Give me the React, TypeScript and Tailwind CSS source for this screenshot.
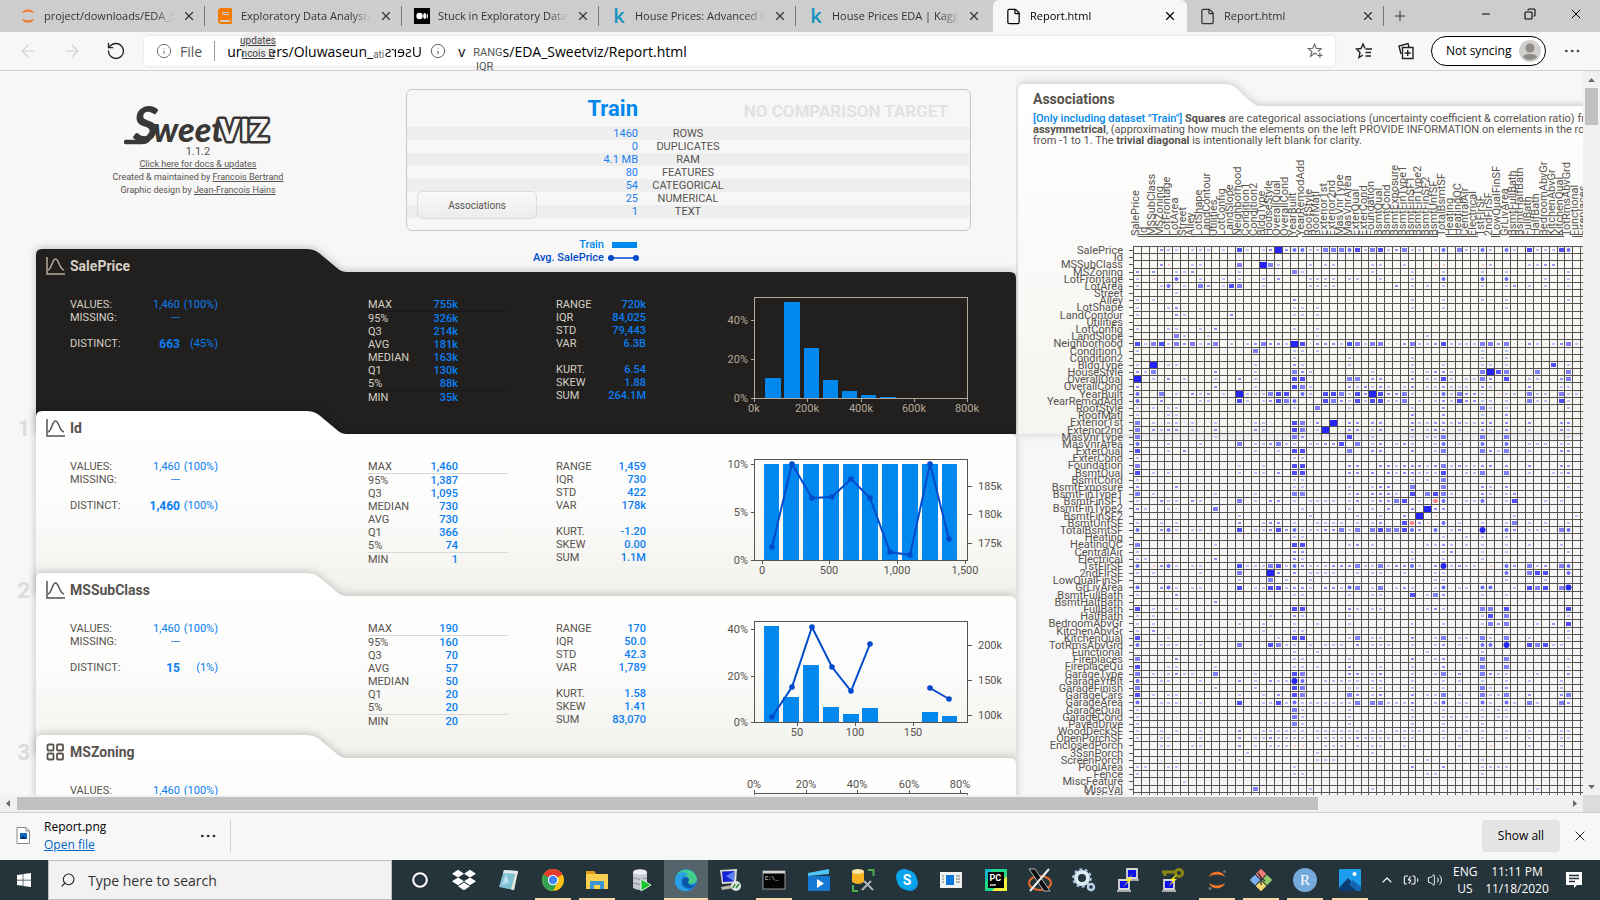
import React from "react";
import { ArrowLeft, ArrowRight, RotateCw, Info, File, X, Plus, Minus, Copy, Ellipsis, ChevronUp, Search, BatteryCharging, Volume2 } from "lucide-react";
import { FaBook, FaDropbox, FaWindows } from "react-icons/fa";

const INK = "#57534e";
const BLUE = "#0088ee";
const LINE = "#004acc";

/* ---------- Browser chrome ---------- */

function JupyterMark({ small }: { small?: boolean }) {
  return (
    <svg viewBox="0 0 20 20" className="size-4 shrink-0" aria-hidden="true">
      <path d="M2 7C4 0 16 0 18 7C14 3.800 6 3.800 2 7Z" fill="#f37726" />
      <path d="M2 13C4 20 16 20 18 13C14 16.200 6 16.200 2 13Z" fill="#f37726" />
      {small && <circle cx="17.500" cy="1.500" r="1.300" fill="#777" />}
      {small && <circle cx="3" cy="18.500" r="1.500" fill="#777" />}
    </svg>
  );
}

function MediumMark() {
  return (
    <svg viewBox="0 0 16 16" className="size-4 shrink-0" aria-hidden="true">
      <rect width="16" height="16" fill="#000" />
      <circle cx="5.500" cy="8" r="3.200" fill="#fff" />
      <ellipse cx="10.700" cy="8" rx="1.500" ry="3" fill="#fff" />
      <ellipse cx="13.300" cy="8" rx="0.600" ry="2.600" fill="#fff" />
    </svg>
  );
}

const kaggle = <span className="w-4 shrink-0 text-center font-['Open_Sans',sans-serif] text-xl leading-none font-semibold text-[#1593bd]">k</span>;

const tabs = [
  { title: "project/downloads/EDA_Sweetviz", icon: <JupyterMark /> },
  { title: "Exploratory Data Analysis in", icon: <FaBook className="size-4 shrink-0 text-[#f57c00]" /> },
  { title: "Stuck in Exploratory Data An", icon: <MediumMark /> },
  { title: "House Prices: Advanced Reg", icon: kaggle },
  { title: "House Prices EDA | Kaggle", icon: kaggle },
  { title: "Report.html", icon: <File className="size-[17px] shrink-0" strokeWidth={1.75} />, active: true },
  { title: "Report.html", icon: <File className="size-[17px] shrink-0" strokeWidth={1.75} /> },
];

function TabBar() {
  return (
    <header className="flex h-8 shrink-0 items-stretch bg-[#cdcdcd] pl-2 text-[11px] text-[#333]">
      {tabs.map((t, i) => (
        <div
          key={i}
          className={
            t.active
              ? "flex w-[194px] items-center gap-2 rounded-t-md bg-[#f7f7f7] pr-2.5 pl-3 text-black"
              : "flex w-[197px] items-center gap-2 pr-3 pl-3"
          }
        >
          {t.icon}
          <span className="min-w-0 flex-1 overflow-hidden whitespace-nowrap [mask-image:linear-gradient(to_right,#000_85%,transparent)]">{t.title}</span>
          <button aria-label="Close tab" className="shrink-0"><X className="size-3.5" strokeWidth={2} /></button>
          {!t.active && i !== 4 && <span className="-mr-3 h-5 w-px bg-[#777]" />}
        </div>
      ))}
      <button aria-label="New tab" className="px-2"><Plus className="size-4" strokeWidth={1.5} /></button>
      <div className="ml-auto flex items-center gap-8 pr-4 pb-1 text-black">
        <button aria-label="Minimize"><Minus className="size-3" strokeWidth={2} /></button>
        <button aria-label="Restore"><Copy className="size-3 -scale-x-100" strokeWidth={2.2} /></button>
        <button aria-label="Close"><X className="size-4" strokeWidth={1.5} /></button>
      </div>
    </header>
  );
}

function Toolbar() {
  return (
    <div className="flex h-[39px] shrink-0 items-center border-b border-[#d0d0d0] bg-[#f7f7f7] pr-[18px] pl-3.5 text-[#222]">
      <button aria-label="Back" className="px-1"><ArrowLeft className="size-5 text-[#cfcfcf]" strokeWidth={1.4} /></button>
      <button aria-label="Forward" className="ml-5"><ArrowRight className="size-5 text-[#cfcfcf]" strokeWidth={1.4} /></button>
      <button aria-label="Refresh" className="ml-6"><RotateCw className="size-5 -scale-x-100" strokeWidth={1.6} /></button>
      <div className="relative ml-[18px] flex h-[30px] flex-1 items-center rounded-sm bg-white pl-3 text-[14px] shadow-[0_0_3px_rgba(0,0,0,0.12)]">
        <Info className="size-4 text-[#666]" strokeWidth={1.4} />
        <span className="ml-2 text-[#555]">File</span>
        <span className="ml-3 h-5 w-px bg-[#999]" />
        <span className="ml-3 flex w-[146px] justify-between whitespace-nowrap text-black">
          <span>un</span>
          <span>ers/Oluwaseun_</span>
        </span>
        <span className="pt-2 font-['Roboto',sans-serif] text-[10px] leading-none text-[#666]">ati</span>
        <span className="inline-block w-[38px] -scale-x-100 text-black">Users</span>
        <Info className="ml-2 size-4 text-[#444]" strokeWidth={1.3} />
        <span className="ml-3 text-black">v</span>
        <span className="ml-2 pt-1 font-['Roboto',sans-serif] text-[11px] text-[#555]">RANG</span>
        <span className="text-black">s/EDA_Sweetviz/Report.html</span>
        <span className="absolute -top-1 left-[96px] flex h-6 w-9 flex-col items-center rounded-full bg-[#e9e9e9]/90 pt-0.5 font-['Roboto',sans-serif] text-[10px] leading-[13px] text-[#444] underline">
          <span>updates</span>
          <span>ncois B</span>
        </span>
        <span className="absolute top-[25px] left-[332px] font-['Roboto',sans-serif] text-[11px] leading-none text-[#555]">IQR</span>
        <button aria-label="Add to favorites" className="ml-auto pr-3">
          <svg viewBox="0 0 18 18" className="size-4" fill="none" stroke="#666" strokeWidth="1.300"><path d="M11 12.500L8.500 11.500L4 15L5.500 9.500L1.500 6.500L6.500 6L8.500 1.500L10.500 6L16 6.500L12.500 9.500" /><path d="M14.500 11V17M11.500 14H17.500" /></svg>
        </button>
      </div>
      <button aria-label="Favorites" className="ml-5">
        <svg viewBox="0 0 18 18" className="size-[18px]" fill="none" stroke="#222" strokeWidth="1.4"><path d="M10 6.500L8 2L6 6.500L1.500 7L5 10.500L4 15.500L8 13" /><path d="M10.500 7H17M10.500 10.500H16M10.500 14H16" /></svg>
      </button>
      <button aria-label="Collections" className="ml-6">
        <svg viewBox="0 0 18 18" className="size-[18px]" fill="none" stroke="#222" strokeWidth="1.4"><path d="M4 12L2 4L11 1.500L12 5M5.500 5.500H16V16.500H5.500Z" /><path d="M10.700 8V14M7.700 11H13.700" /></svg>
      </button>
      <button className="ml-4 flex h-[30px] w-[115px] items-center justify-between rounded-full border border-black bg-white pr-1 pl-3.5 text-[12px] text-black">
        Not syncing
        <svg viewBox="0 0 22 22" className="size-[22px]"><circle cx="11" cy="11" r="11" fill="#d2d0ce" /><circle cx="11" cy="8" r="4.500" fill="#8f8b87" /><path d="M4 17C4 13 18 13 18 17C15 21 7 21 4 17Z" fill="#8f8b87" /></svg>
      </button>
      <button aria-label="Menu" className="ml-4"><Ellipsis className="size-5" strokeWidth={1.2} /></button>
    </div>
  );
}

/* ---------- Report header ---------- */

function Logo() {
  return (
    <svg viewBox="0 0 148 42" className="h-[42px] w-[148px]" role="img" aria-label="Sweetviz">
      <path d="M2 37H18Q25 37 26 30" fill="none" stroke="#3a3836" strokeWidth="4.500" strokeLinecap="round" />
      <text x="9" y="37" fontFamily="Lato" fontWeight="900" fontStyle="italic" fontSize="49" fill="#3a3836">S</text>
      <text x="29" y="37" fontFamily="Lato" fontWeight="900" fontStyle="italic" fontSize="34" fill="#3a3836">weet</text>
      <text x="95" y="36" fontFamily="Roboto" fontWeight="700" fontSize="32" fill="#f7f7f7" stroke="#3a3836" strokeWidth="5" strokeLinejoin="round" paintOrder="stroke">VIZ</text>
    </svg>
  );
}

const summary: [string, string][] = [
  ["1460", "ROWS"], ["0", "DUPLICATES"], ["4.1 MB", "RAM"], ["80", "FEATURES"], ["54", "CATEGORICAL"], ["25", "NUMERICAL"], ["1", "TEXT"],
];

function ReportHeader() {
  return (
    <div className="flex h-[178px] pt-[18px]">
      <div className="flex w-[406px] shrink-0 flex-col items-center pt-4 pr-2.5 text-[9px] leading-[13px] text-[#57534e]">
        <Logo />
        <span className="-mt-0.5 text-[11px]">1.1.2</span>
        <a href="#docs" className="underline">Click here for docs &amp; updates</a>
        <span>Created &amp; maintained by <a href="#fb" className="underline">Francois Bertrand</a></span>
        <span>Graphic design by <a href="#jfh" className="underline">Jean-Francois Hains</a></span>
      </div>
      <div className="w-[565px] shrink-0">
        <div className="relative h-[142px] rounded-md border border-[#cfc6c2]">
          <table className="w-full table-fixed border-collapse text-[11px] leading-[13px]">
            <thead>
              <tr className="h-[37px]">
                <th className="w-[231px] p-0 text-right text-[22px] leading-7 font-bold text-[#0088ee]">Train</th>
                <th className="w-[100px]" />
                <th className="p-0 pt-1 pr-[22px] text-right text-[17px] leading-7 font-bold whitespace-nowrap text-[#e2e2e2]">NO COMPARISON TARGET</th>
              </tr>
            </thead>
            <tbody>
              {summary.map(([v, l]) => (
                <tr key={l} className="h-[13px] odd:bg-[#eeeeee]">
                  <td className="p-0 text-right text-[#1c80f0]">{v}</td>
                  <td className="p-0 text-center text-[#57534e]">{l}</td>
                  <td className="p-0" />
                </tr>
              ))}
            </tbody>
          </table>
          <button className="absolute bottom-[11px] left-[10px] h-7 w-[120px] rounded-md border border-[#dcdcdc] bg-linear-to-b from-[#fafafa] to-[#ececec] text-[10px] text-[#57534e]">Associations</button>
        </div>
        <div className="flex w-[231px] flex-col items-end pt-[7px] text-[11px] leading-[13px] font-medium">
          <div className="flex items-center gap-2 text-[#0088ee]">Train<span className="h-1.5 w-[25px] bg-[#0088ee]" /></div>
          <div className="-mr-0.5 flex items-center gap-1 text-[#004acc]">
            Avg. SalePrice
            <svg viewBox="0 0 31 8" className="h-2 w-[31px]"><path d="M3 4H28" stroke={LINE} strokeWidth="1.500" /><circle cx="3" cy="4" r="3" fill={LINE} /><circle cx="28" cy="4" r="3" fill={LINE} /></svg>
          </div>
        </div>
      </div>
    </div>
  );
}

/* ---------- Feature cards ---------- */

type Tick = [number, string];
type Bar = [number, number, number];
type Chart = { bars: Bar[]; lines?: [number, number][][]; left: Tick[]; right?: Tick[]; bottom: Tick[] };

function Histogram({ chart, color }: { chart: Chart; color: string }) {
  return (
    <svg viewBox="0 0 310 130" className="h-[130px] w-[310px]" fontFamily="Roboto, sans-serif" fontSize="11" fill={color}>
      {chart.bars.map(([x, y, w], i) => <rect key={i} x={x} y={y} width={w} height={109 - y} fill={BLUE} />)}
      <rect x="54.500" y="8.500" width="213" height="101" fill="none" stroke={color} />
      {chart.left.map(([y, t]) => (
        <g key={t}><path d={`M51 ${y + 0.5}H54`} stroke={color} /><text x="48" y={y + 4} textAnchor="end">{t}</text></g>
      ))}
      {chart.right?.map(([y, t]) => (
        <g key={t}><path d={`M268 ${y + 0.5}H272`} stroke={color} /><text x="278" y={y + 4}>{t}</text></g>
      ))}
      {chart.bottom.map(([x, t]) => (
        <g key={t}><path d={`M${x + 0.5} 110V113`} stroke={color} /><text x={x} y="123" textAnchor="middle">{t}</text></g>
      ))}
      {chart.lines?.map((pts, i) => (
        <g key={i} fill={LINE}>
          <polyline points={pts.map((p) => p.join(",")).join(" ")} fill="none" stroke={LINE} strokeWidth="2" />
          {pts.map(([x, y]) => <circle key={x} cx={x} cy={y} r="2.800" />)}
        </g>
      ))}
    </svg>
  );
}

function TopAxis() {
  const ticks: Tick[] = [[54, "0%"], [106, "20%"], [157, "40%"], [209, "60%"], [260, "80%"]];
  return (
    <svg viewBox="0 0 310 130" className="h-[130px] w-[310px]" fontFamily="Roboto, sans-serif" fontSize="11" fill={INK}>
      <path d="M54.500 60V18.500H267.500V60" fill="none" stroke={INK} />
      {ticks.map(([x, t]) => (
        <g key={t}><path d={`M${x + 0.5} 15V18`} stroke={INK} /><text x={x} y="13" textAnchor="middle">{t}</text></g>
      ))}
    </svg>
  );
}

type Feature = {
  n?: number; name: string; dark?: boolean; distinct?: [string, string];
  quant?: [string, string][]; stats?: [string, string][]; chart?: Chart;
};

const features: Feature[] = [
  {
    name: "SalePrice", dark: true, distinct: ["663", "(45%)"],
    quant: [["MAX", "755k"], ["95%", "326k"], ["Q3", "214k"], ["AVG", "181k"], ["MEDIAN", "163k"], ["Q1", "130k"], ["5%", "88k"], ["MIN", "35k"]],
    stats: [["RANGE", "720k"], ["IQR", "84,025"], ["STD", "79,443"], ["VAR", "6.3B"], ["", ""], ["KURT.", "6.54"], ["SKEW", "1.88"], ["SUM", "264.1M"]],
    chart: {
      bars: [[65, 89, 16], [84, 13, 16], [104, 59, 15], [123, 91, 15], [142, 102, 15], [161, 106, 15], [180, 108, 16]],
      left: [[31, "40%"], [70, "20%"], [109, "0%"]],
      bottom: [[54, "0k"], [107, "200k"], [161, "400k"], [214, "600k"], [267, "800k"]],
    },
  },
  {
    n: 1, name: "Id", distinct: ["1,460", "(100%)"],
    quant: [["MAX", "1,460"], ["95%", "1,387"], ["Q3", "1,095"], ["MEDIAN", "730"], ["AVG", "730"], ["Q1", "366"], ["5%", "74"], ["MIN", "1"]],
    stats: [["RANGE", "1,459"], ["IQR", "730"], ["STD", "422"], ["VAR", "178k"], ["", ""], ["KURT.", "-1.20"], ["SKEW", "0.00"], ["SUM", "1.1M"]],
    chart: {
      bars: [[64, 13, 15], [83, 13, 16], [103, 13, 16], [123, 13, 16], [143, 13, 16], [162, 13, 16], [182, 13, 16], [202, 13, 16], [222, 13, 16], [242, 13, 15]],
      lines: [[[72, 96], [92, 13], [112, 47], [132, 46], [151, 28], [170, 47], [190, 101], [210, 104], [230, 13], [249, 88]]],
      left: [[13, "10%"], [61, "5%"], [109, "0%"]],
      right: [[35, "185k"], [63, "180k"], [92, "175k"]],
      bottom: [[62, "0"], [129, "500"], [197, "1,000"], [265, "1,500"]],
    },
  },
  {
    n: 2, name: "MSSubClass", distinct: ["15", "(1%)"],
    quant: [["MAX", "190"], ["95%", "160"], ["Q3", "70"], ["AVG", "57"], ["MEDIAN", "50"], ["Q1", "20"], ["5%", "20"], ["MIN", "20"]],
    stats: [["RANGE", "170"], ["IQR", "50.0"], ["STD", "42.3"], ["VAR", "1,789"], ["", ""], ["KURT.", "1.58"], ["SKEW", "1.41"], ["SUM", "83,070"]],
    chart: {
      bars: [[64, 13, 15], [83, 84, 16], [103, 52, 16], [123, 94, 16], [143, 101, 16], [162, 95, 16], [222, 99, 16], [242, 103, 15]],
      lines: [[[72, 104], [92, 74], [112, 14], [132, 54], [151, 78], [170, 31]], [[230, 75], [249, 86]]],
      left: [[16, "40%"], [63, "20%"], [109, "0%"]],
      right: [[32, "200k"], [67, "150k"], [102, "100k"]],
      bottom: [[97, "50"], [155, "100"], [213, "150"]],
    },
  },
  { n: 3, name: "MSZoning" },
];

function Row({ label, value, dark, bold, extra }: { label: string; value: string; dark?: boolean; bold?: boolean; extra?: string }) {
  return (
    <div className="flex h-[13px]">
      <dt className={dark ? "w-[60px] text-[#d6cfc4]" : "w-[60px] text-[#57534e]"}>{label}</dt>
      <dd className={bold ? "w-[50px] text-right text-[12px] leading-[14px] font-bold" : "w-[50px] text-right"}>{value}</dd>
      <dd className="w-[38px] text-right">{extra}</dd>
    </div>
  );
}

function FeatureCard({ f }: { f: Feature }) {
  const label = f.dark ? "text-[#d6cfc4]" : "text-[#57534e]";
  const fg = f.dark ? "#b5a898" : INK;
  return (
    <section className="relative flex h-[162px]">
      <div className="absolute top-0 left-[36px] h-[185px] w-[980px] drop-shadow-[0_-1px_4px_rgba(0,0,0,0.22)]">
        <div
          className={
            f.dark
              ? "h-full bg-[#21201e] [clip-path:path('M0_6Q0_0_6_0H270Q278_0_283_4L301_19Q305_23_311_23H974Q980_23_980_29V185H0Z')]"
              : "h-full bg-linear-to-b from-white via-[#fcfcfb] to-[#f1f1ec] [clip-path:path('M0_6Q0_0_6_0H270Q278_0_283_4L301_19Q305_23_311_23H974Q980_23_980_29V185H0Z')]"
          }
        />
      </div>
      <div className="relative w-[36px] shrink-0 pt-1 pr-1.5 text-right text-[22px] leading-7 font-bold text-[#dcdcdc]">{f.n}</div>
      <div className="relative min-w-0 flex-1">
        <h2 className={`flex h-[33px] items-center gap-[5px] pt-px pl-[10px] text-[14px] font-bold ${label}`}>
          {f.chart ? (
            <svg viewBox="0 0 19 18" className="h-[18px] w-[19px]" fill="none" stroke={fg} strokeWidth="1.500"><path d="M1 0V17H19" /><path d="M2 13C6 12 6 2 9.500 2S13 12 18 13" /></svg>
          ) : (
            <svg viewBox="0 0 19 18" className="h-[18px] w-[19px]" fill="none" stroke={fg} strokeWidth="1.800"><rect x="1.500" y="1.500" width="6" height="6" rx="1" /><rect x="11" y="1.500" width="6" height="6" rx="1" /><rect x="1.500" y="10.500" width="6" height="6" rx="1" /><rect x="11" y="10.500" width="6" height="6" rx="1" /></svg>
          )}
          {f.name}
        </h2>
        <div className="flex text-[11px] leading-[13px] text-[#0a7df2]">
          <dl className="ml-[34px] w-[298px] shrink-0 pt-4">
            <Row label="VALUES:" value="1,460" extra="(100%)" dark={f.dark} />
            <Row label="MISSING:" value="---" dark={f.dark} />
            <div className="h-[13px]" />
            {f.distinct && <Row label="DISTINCT:" value={f.distinct[0]} extra={f.distinct[1]} bold dark={f.dark} />}
          </dl>
          <dl className="w-[188px] shrink-0 pt-4">
            {f.quant?.map(([k, v], i) => (
              <div
                key={k}
                className={
                  i === 0
                    ? `flex w-[140px] border-b ${f.dark ? "border-[#1a1918]" : "border-[#d8d8d8]"}`
                    : i === 7
                      ? `flex w-[140px] border-t ${f.dark ? "border-[#1a1918]" : "border-[#d8d8d8]"}`
                      : "flex w-[140px]"
                }
              >
                <dt className={`w-[50px] ${label}`}>{k}</dt>
                <dd className="w-[40px] text-right font-medium">{v}</dd>
              </div>
            ))}
          </dl>
          <dl className="w-[144px] shrink-0 pt-4">
            {f.stats?.map(([k, v], i) => (
              <div key={i} className="flex h-[13px]">
                <dt className={`w-[45px] ${label}`}>{k}</dt>
                <dd className="w-[45px] text-right font-medium">{v}</dd>
              </div>
            ))}
          </dl>
          <div className="pt-[7px]">{f.chart ? <Histogram chart={f.chart} color={fg} /> : <TopAxis />}</div>
        </div>
      </div>
    </section>
  );
}

/* ---------- Associations matrix ---------- */

const names = "SalePrice Id MSSubClass MSZoning LotFrontage LotArea Street Alley LotShape LandContour Utilities LotConfig LandSlope Neighborhood Condition1 Condition2 BldgType HouseStyle OverallQual OverallCond YearBuilt YearRemodAdd RoofStyle RoofMatl Exterior1st Exterior2nd MasVnrType MasVnrArea ExterQual ExterCond Foundation BsmtQual BsmtCond BsmtExposure BsmtFinType1 BsmtFinSF1 BsmtFinType2 BsmtFinSF2 BsmtUnfSF TotalBsmtSF Heating HeatingQC CentralAir Electrical 1stFlrSF 2ndFlrSF LowQualFinSF GrLivArea BsmtFullBath BsmtHalfBath FullBath HalfBath BedroomAbvGr KitchenAbvGr KitchenQual TotRmsAbvGrd Functional Fireplaces FireplaceQu GarageType GarageYrBlt GarageFinish GarageCars GarageArea GarageQual GarageCond PavedDrive WoodDeckSF OpenPorchSF EnclosedPorch 3SsnPorch ScreenPorch PoolArea Fence MiscFeature MiscVal MoSold".split(" ");

/* One string per row: a strength letter, then the columns that have it.
   t faint dot, a weak, b moderate, d medium, e strong, f strongest,
   o / O round marks for numeric pairs, r / R negative. */
const cells = [
  "a 4 5 7 8 9 11 14 16 22 23 29 32 35 36 38 42 43 45 48 51 52 53 b 3 17 19 33 d 24 25 26 30 34 41 e 13 28 31 50 54 f 18 o 20 21 27 39 44 47 55",
  "t 8 13 16 20 22 24 26 30 34 39 44 47 52 55",
  "a 7 8 18 22 24 25 30 31 34 45 50 51 b 3 52 53 d 13 17 f 16 r 4 38 39 44",
  "a 5 6 13 21 30 35 39 44 47 55 b 0 2 7 d 20",
  "a 0 8 11 13 16 22 23 24 25 27 28 31 35 52 55 b 18 o 5 39 44 47 r 2",
  "a 0 3 6 11 16 22 23 24 25 35 37 39 44 47 50 52 55 b 9 33 48 d 8 13 e 12 o 4",
  "a 5 t 13 20",
  "a 0 2 35 39 44 47 55 b 20 t 3 5 13 21 22 27 40 45 50",
  "a 0 4 20 21 23 35 39 47 b 5",
  "a 0 6 20 21 23 b 5 12",
  "t 0 20",
  "a 0 4 5 8 20 23 b 10",
  "a 6 9 23 37 d 5",
  "a 1 4 8 12 14 19 26 29 36 37 40 41 42 43 51 53 56 b 6 9 15 17 18 23 24 25 34 38 46 50 54 t 22 32 33 48 49 52 d 2 5 7 10 16 28 30 31 35 44 45 47 55 e 0 3 21 27 39 f 20",
  "a 0 20 21 23 44 47 d 15",
  "a 20 27 35 44 47",
  "a 0 4 5 15 21 27 35 39 44 45 47 55 b 20 e 53 f 2",
  "a 1 15 22 30 35 37 40 51 b 0 10 21 38 39 d 2 20 44 47 51 55 e 46 f 45",
  "a 2 6 10 15 37 38 40 42 43 50 51 b 4 13 30 31 35 45 54 d 27 28 44 55 e 20 21 39 47 f 0",
  "a 15 22 28 30 32 34 37 38 40 41 42 45 54 55 b 0 10 27 29 31 35 39 44 50 t 2 4 6 13 18 e 20 d 21",
  "a 5 8 11 14 15 16 22 27 35 38 40 44 47 48 51 52 55 56 b 7 9 29 32 33 42 43 d 3 17 26 34 41 50 54 e 18 19 24 25 28 31 f 13 30 o 0 21 39 r 46",
  "a 8 9 14 16 27 29 32 33 36 38 40 44 45 47 51 52 55 b 3 17 26 39 42 43 d 19 25 34 50 e 13 18 24 28 30 31 41 54 o 0 20",
  "a 0 2 4 5 20 27 35 45 47 55 b 39 d 23 44",
  "a 0 4 5 44 b 35 39 47",
  "a 2 4 5 7 10 15 16 36 37 40 42 43 b 23 27 28 30 31 35 38 39 41 44 45 47 50 54 55 t 3 6 13 17 22 d 0 21 e 20 f 25",
  "a 3 7 16 23 30 37 41 45 50 55 b 2 4 5 10 15 27 28 31 35 38 39 44 47 54 d 0 21 e 20 f 24",
  "a 10 30 35 37 38 55 b 21 d 0 20 39 44 47 e 27",
  "a 4 8 15 16 19 20 22 23 30 33 35 38 41 50 51 52 54 55 b 17 24 25 31 34 d 13 18 28 e 26 o 0 39 44 47",
  "a 4 15 18 38 46 50 b 6 30 31 35 45 54 55 d 27 39 44 47 e 0 20 21",
  "a 0 20 21",
  "a 13 16 33 37 40 42 43 b 27 28 31 32 34 35 36 38 41 44 45 47 50 54 55 t 2 4 6 8 10 15 24 29 d 0 39 e 20 21",
  "a 2 4 13 15 16 33 36 37 38 42 43 50 53 54 b 18 27 28 30 32 34 35 55 d 44 47 e 0 20 21 39",
  "a 0 20 21 35 37 d 39",
  "a 20 21 27 30 45 55 b 0 5 31 32 44 47 d 35 39",
  "a 2 10 15 27 33 40 45 47 b 28 30 31 32 44 48 d 0 20 21 37 39 e 35 38",
  "a 0 4 5 8 15 20 22 23 24 25 27 30 36 42 43 47 52 54 b 3 7 17 18 28 31 32 d 13 33 e 34 48 o 39 44 R 38",
  "a 1 4 21 27 30 b 0 32 35 38 39 d 10 f 37 t 2 5 20",
  "a 13 22 28 31 48 56 b 34 f 36 r 38",
  "a 0 3 5 16 20 23 24 25 26 28 30 41 44 47 50 52 55 b 13 17 18 31 36 d 48 e 34 o 39 R 35 r 37",
  "a 5 7 8 15 16 21 22 23 27 40 50 51 52 b 3 17 19 24 25 36 41 48 d 26 28 30 32 33 54 e 13 18 31 34 o 0 4 20 35 38 47 55 O 44",
  "a 20 21 39 42 44 47",
  "a 10 27 30 37 38 40 42 44 47 50 54 b 28 39 d 0 e 20 21",
  "a 0 35 39 44 47 55 b 20 21 40 t 2 7 13 24 30 50",
  "a 0 1 21 35 39 44 b 10 20",
  "a 5 7 8 14 15 16 19 22 23 24 29 30 32 36 40 42 43 51 b 3 21 25 26 27 33 34 38 41 48 52 d 17 28 31 50 54 e 13 18 o 0 4 20 35 47 55 O 39 r 2 45",
  "a 0 2 8 22 23 24 25 28 30 31 34 38 39 b 18 20 d 13 50 e 51 52 f 17 o 47 55 r 44",
  "a 13 19 22 38 39 47 52 d 17 r 20",
  "a 5 7 8 15 16 19 22 26 30 33 35 38 41 42 48 b 3 20 21 24 25 34 d 28 31 51 54 e 13 17 18 50 52 o 0 4 27 39 44 45 O 55",
  "a 0 20 21 27 30 31 37 44 47 b 5 39 d 38 e 35 t 2 4 13 15",
  "b 10",
  "a 2 5 28 30 31 37 39 b 27 38 d 44 45 e 0 20 21 47 55",
  "a 0 2 17 21 27 44 55 b 20 d 47 e 45",
  "a 0 2 13 16 20 23 27 35 39 44 51 b 46 53 d 45 47 e 55",
  "a 0 16 20 21 55 b 2 t 15 44",
  "a 4 18 27 30 31 38 41 42 45 50 55 b 35 d 28 39 44 47 e 0 20 21",
  "a 3 4 5 8 19 20 22 24 25 26 30 31 32 35 38 41 53 54 b 28 39 d 13 18 51 e 17 50 52 o 0 44 45 O 47",
  "a 20 23 37 44 t 10 33",
  "a 20 21 27 38 55 b 5 35 39 d 0 44 47",
  "a 4 5 10 20 21 23 31 35 55 b 27 39 d 44 47 e 0",
  "a 2 4 6 7 15 30 35 38 46 47 51 b 5 27 28 31 41 45 55 t 3 8 13 18 24 33 36 40 50 53 d 0 10 21 39 44 e 20",
  "a 3 4 8 15 18 19 24 25 26 27 28 30 31 35 39 41 44 47 50 54 b 13 17 o 0 21 O 20",
  "a 10 15 27 28 30 31 35 39 45 54 b 47 d 0 21 44 e 20",
  "a 2 4 5 13 16 30 37 38 41 45 46 b 18 28 31 35 50 54 d 21 27 39 44 47 55 e 0 20",
  "a 3 4 5 8 16 17 19 21 22 23 24 25 26 27 32 33 34 38 41 42 45 48 51 b 35 55 d 28 30 31 50 54 e 13 18 o 0 20 39 44 47",
  "a 0 21 27 35 39 44 46 47 d 20",
  "a 0 21 27 35 39 40 42 44 46 47 d 20 t 2 5 13 18 30 50 54",
  "a 0 21 27 35 39 44 d 20",
  "a 0 3 5 8 16 17 18 19 20 21 23 24 25 26 27 28 30 31 33 34 35 36 39 42 44 47 50 54 55 b 13",
  "a 0 3 4 8 15 16 18 19 20 21 23 24 25 26 27 29 30 31 32 34 35 39 41 44 47 50 54 55 b 13 17 28",
  "a 3 4 7 8 15 17 18 19 24 25 26 28 30 31 34 41 50 54 b 13 r 20 21 45",
  "a 14 23 30",
  "a 13 23 24 25 37 44 t 3 5 8 18 30 35 42 50 53",
  "a 0 1 4 5 20 44 45 46 47 b 35 39",
  "a 0 20 21 37 38 44",
  "a 6",
  "a 22 30 51 d 15",
  "a 18 23",
];

const marks: Record<string, { w: number; h: number; fill: string; round?: boolean }> = {
  t: { w: 1, h: 1, fill: "#bdbdf5" },
  a: { w: 3, h: 2, fill: "#bfbffb" },
  b: { w: 3, h: 2, fill: "#9292fb" },
  d: { w: 5, h: 4, fill: "#8080fd" },
  e: { w: 5, h: 4, fill: "#4f4ffc" },
  f: { w: 7, h: 6, fill: "#2424fb" },
  o: { w: 4, h: 4, fill: "#6f6ffb", round: true },
  O: { w: 6, h: 6, fill: "#2727f5", round: true },
  r: { w: 2, h: 2, fill: "#ffc4c4" },
  R: { w: 5, h: 4, fill: "#ff8080", round: true },
};

const COLS = 57;
const colX = (i: number) => Math.round(115 + i * 7.845);
const rowY = (i: number) => Math.round(96 + i * 7.18);

function Matrix() {
  return (
    <svg viewBox="0 0 565 645" className="h-[645px] w-[565px]" fontFamily="Roboto, sans-serif" fontSize="11" fill={INK}>
      {names.slice(0, COLS + 1).map((n, i) => (
        <text key={n} transform={`translate(${colX(i) + 6} 86) rotate(-90)`}>{n}</text>
      ))}
      <path d="M120 86.500H280M284 86.500H420M428 86.500H460M473 86.500H482M491 86.500H546M554 86.500H565" stroke={INK} />
      {names.map((n, i) => (
        <text key={n} x="105" y={rowY(i) + 8} textAnchor="end">{n}</text>
      ))}
      {names.map((n, i) => <path key={n} d={`M111 ${rowY(i) + 4.5}H115`} stroke={INK} />)}
      {names.map((n, i) => <path key={n} d={`M115 ${rowY(i) + 0.5}H565`} stroke={INK} />)}
      {Array.from({ length: COLS + 1 }, (_, i) => <path key={i} d={`M${colX(i) + 0.5} 96V645`} stroke={INK} />)}
      {cells.map((row, r) => {
        let kind = "a";
        return row.split(" ").map((tok, k) => {
          if (marks[tok]) {
            kind = tok;
            return null;
          }
          const c = Number(tok);
          const m = marks[kind];
          const cx = (colX(c) + colX(c + 1) + 1) / 2;
          const cy = (rowY(r) + rowY(r + 1) + 1) / 2;
          return m.round ? (
            <ellipse key={k} cx={cx} cy={cy} rx={m.w / 2} ry={m.h / 2} fill={m.fill} />
          ) : (
            <rect key={k} x={Math.round(cx - m.w / 2)} y={Math.round(cy - m.h / 2)} width={m.w} height={m.h} fill={m.fill} />
          );
        });
      })}
    </svg>
  );
}

function Associations() {
  return (
    <aside className="relative min-w-0 flex-1 overflow-hidden pt-[13px] pl-[2px]">
      <div className="absolute top-[13px] left-[2px] h-[350px] w-full drop-shadow-[0_-1px_4px_rgba(0,0,0,0.2)]">
        <div className="h-full w-[700px] bg-linear-to-b from-white to-[#f4f4f0] [clip-path:path('M0_6Q0_0_6_0H206Q213_0_218_4L232_17Q237_22_243_22H700V350H0Z')]" />
      </div>
      <div className="relative w-[1000px] text-[#57534e]">
        <h2 className="h-[29px] pt-[5px] pl-[15px] text-[14px] leading-5 font-bold">Associations</h2>
        <p className="h-[37px] pl-[15px] text-[11px] leading-[11px]">
          <span className="font-medium text-[#0088ee]">[Only including dataset "Train"]</span> <b>Squares</b> are categorical associations (uncertainty coefficient &amp; correlation ratio) from 0 to 1.<br />
          <b>assymmetrical</b>, (approximating how much the elements on the left PROVIDE INFORMATION on elements in the row).<br />
          from -1 to 1. The <b>trivial diagonal</b> is intentionally left blank for clarity.
        </p>
        <Matrix />
      </div>
    </aside>
  );
}

/* ---------- Scrollbars, downloads, taskbar ---------- */

function Arrow({ d }: { d: string }) {
  return <svg viewBox="0 0 17 17" className="size-[17px] shrink-0" fill="#6b6b6b" aria-hidden="true"><path d={d} /></svg>;
}

function Downloads() {
  return (
    <div className="flex h-[48px] shrink-0 items-center border-t border-[#cfcfcf] bg-[#f7f7f7] pr-3 pb-0.5 pl-4 text-[12px]">
      <svg viewBox="0 0 14 17" className="h-[17px] w-[14px]"><path d="M1 .5H10L13.500 4V16.500H1Z" fill="#fff" stroke="#888" /><path d="M10 .5V4H13.500" fill="none" stroke="#888" /><rect x="4" y="6" width="7" height="6" fill="#1565c0" /><path d="M4 12L7 9L11 12Z" fill="#0b2f66" /></svg>
      <div className="ml-[14px] flex flex-col leading-[18px]">
        <span>Report.png</span>
        <a href="#open" className="text-[#0067c5] underline">Open file</a>
      </div>
      <button aria-label="More options" className="ml-[92px]"><Ellipsis className="size-5" strokeWidth={1.2} /></button>
      <span className="ml-3 h-8 w-px bg-[#cfcfcf]" />
      <button className="ml-auto h-8 w-[78px] rounded-sm bg-[#e4e4e4] font-medium">Show all</button>
      <button aria-label="Close downloads" className="ml-3"><X className="size-4" strokeWidth={1.3} /></button>
    </div>
  );
}

const I = ({ children }: { children: React.ReactNode }) => <svg viewBox="0 0 24 24" className="size-6">{children}</svg>;

const apps: { name: string; icon: React.ReactNode; open?: boolean; active?: boolean }[] = [
  { name: "Cortana", icon: <I><circle cx="12" cy="12" r="6.800" fill="none" stroke="#fff" strokeWidth="2" /></I> },
  { name: "Dropbox", icon: <FaDropbox className="size-6 text-white" /> },
  { name: "Notepad", icon: <I><path d="M7 2L21 3L17 22L2 19Z" fill="#7fc1d2" /><path d="M7 2L21 3L20.500 6L6 5Z" fill="#dfe9ea" /><path d="M14 21.500L17 22L21 3L19 3Z" fill="#e9e4dc" /><path d="M5 17L9 6L12 14Z" fill="#b7e1ec" /></I> },
  { name: "Chrome", open: true, icon: <I><circle cx="12" cy="12" r="11" fill="#fbc116" /><path d="M12 12L2.500 6.500A11 11 0 0 1 21.500 6.500Z" fill="#e33b2e" /><path d="M2.500 6.500A11 11 0 0 0 12 23L16.500 14Z" fill="#30a350" /><circle cx="12" cy="12" r="5.300" fill="#fff" /><circle cx="12" cy="12" r="4.200" fill="#4384f3" /></I> },
  { name: "File Explorer", open: true, icon: <I><path d="M1 3H9L11 6H23V21H1Z" fill="#f9cf52" /><path d="M1 3H9L11 6H1Z" fill="#e39a1b" /><path d="M5 21V13H19V21H15V17H9V21Z" fill="#3a94d8" /></I> },
  { name: "SQL Server", icon: <I><path d="M4 4V20Q11 24 18 20V4Z" fill="#c9c9d4" /><ellipse cx="11" cy="4" rx="7" ry="2.800" fill="#eeeef4" /><path d="M4 10Q11 13 18 10M4 15Q11 18 18 15" stroke="#8f8f9c" fill="none" /><path d="M12 11L22 17L12 23Z" fill="#13c52c" stroke="#fff" strokeWidth=".8" /></I> },
  { name: "Edge", open: true, active: true, icon: <I><circle cx="12" cy="12" r="11" fill="#1c84d8" /><path d="M2 9C5-1 21-1 23 11C23 16 16 17 14 15C16 12 15 8 10 8C6 8 3 10 2 9Z" fill="#46cf8c" /><path d="M1 12C2 4 11 2 15 7C12 6 7 8 7 14C7 20 13 22 17 22C8 26 0 19 1 12Z" fill="#2b9fe8" /><path d="M8 13C8 9 15 8 15 12C12 15 16 19 21 17C17 23 8 20 8 13Z" fill="#0d58a8" /></I> },
  { name: "Remote Desktop", icon: <I><path d="M2 2L19 1L18 15L4 16Z" fill="#dcdccf" /><path d="M4 3.500L16.500 3L16 13.500L5 14Z" fill="#1422d8" /><path d="M8 8L16.500 3L16 13.500Z" fill="#5c7cf2" /><path d="M3 19L14 17L16 20L4 22Z" fill="#b9b9ae" /><circle cx="18" cy="18" r="5" fill="#dfe3df" /><path d="M15 20L17 16M18 20L21 16" stroke="#2b8a33" strokeWidth="1.500" /></I> },
  { name: "Command Prompt", open: true, icon: <I><rect x="1" y="3" width="22" height="18" fill="#050505" stroke="#999" /><rect x="1" y="3" width="22" height="2.500" fill="#d5d5d5" /><text x="3" y="12" fontSize="5.500" fontFamily="Liberation Mono" fill="#fff">C:\_</text></I> },
  { name: "Movies", icon: <I><path d="M1 5L22 1V6L1 8Z" fill="#4fc7f5" /><rect x="1" y="8" width="22" height="15" fill="#1477d4" /><path d="M10 11L17 15.500L10 20Z" fill="#fff" /></I> },
  { name: "Data Tools", icon: <I><path d="M1 3V14Q7 18 13 14V3Z" fill="#f4b223" /><ellipse cx="7" cy="3.500" rx="6" ry="2.500" fill="#fbe4a8" /><path d="M17 2H22.500V8M2 17V23H7" stroke="#4caf50" fill="none" strokeWidth="2" /><path d="M11 22L20 13M13 13L22 22" stroke="#aeb3b7" strokeWidth="2" /></I> },
  { name: "Skype", icon: <I><rect x="1" y="1" width="16" height="16" rx="8" fill="#0aa5ee" /><rect x="7" y="7" width="16" height="16" rx="8" fill="#0a97e6" /><circle cx="12" cy="12" r="10" fill="#08a4ee" /><text x="12" y="17" textAnchor="middle" fontFamily="Roboto" fontWeight="700" fontSize="14" fill="#fff">S</text></I> },
  { name: "News", icon: <I><rect x="1" y="4" width="22" height="16" fill="#f1f1f1" /><rect x="7" y="7" width="8" height="10" fill="#0d78d7" /><path d="M3 8H5M3 11H5M3 14H5M17 8H21M17 11H21M17 14H21" stroke="#777" /></I> },
  { name: "PyCharm", icon: <I><path d="M1 1H23V23H1Z" fill="#21d789" /><path d="M23 8V23H8Z" fill="#f6ee3e" /><path d="M1 14V1H8Z" fill="#13b9c9" /><rect x="4" y="4" width="16" height="16" fill="#000" /><text x="5.500" y="13" fontFamily="Roboto" fontWeight="700" fontSize="9" fill="#fff">PC</text><path d="M6 17H12" stroke="#fff" strokeWidth="1.300" /></I> },
  { name: "XLaunch", icon: <I><ellipse cx="12" cy="15" rx="11" ry="7" fill="none" stroke="#e2692c" strokeWidth="2" /><path d="M1 1H7L22 23H16Z" fill="#0b0b0b" stroke="#ddd" strokeWidth=".8" /><path d="M21 1L2 23" stroke="#eee" strokeWidth="2" /></I> },
  { name: "Services", icon: <I><circle cx="10" cy="10" r="6" fill="none" stroke="#dbe9f5" strokeWidth="4" /><circle cx="10" cy="10" r="8.800" fill="none" stroke="#a9c8e4" strokeWidth="2" strokeDasharray="3 2.500" /><circle cx="19" cy="19" r="3" fill="none" stroke="#b8d1e8" strokeWidth="2.500" /></I> },
  { name: "PuTTY", icon: <I><path d="M11 1H21V10H11ZM3 12H13V21H3Z" fill="#1010e8" stroke="#d8d8d8" strokeWidth="1.800" /><path d="M1 23H15M10 12H23" stroke="#aaa" strokeWidth="2" /><path d="M17 6L9 13H12L7 19L16 11H13Z" fill="#ffef1f" /></I> },
  { name: "PuTTYgen", icon: <I><path d="M1 4H14M4 4V8" stroke="#8c8a12" strokeWidth="3" /><circle cx="18" cy="5" r="3.500" fill="none" stroke="#8c8a12" strokeWidth="3" /><path d="M3 12H13V21H3Z" fill="#1010e8" stroke="#d8d8d8" strokeWidth="1.800" /><path d="M1 23H15" stroke="#aaa" strokeWidth="2" /><path d="M16 6L9 12H12L8 18L16 11H13Z" fill="#ffef1f" /></I> },
  { name: "Jupyter", open: true, icon: <span className="scale-125"><JupyterMark small /></span> },
  { name: "Git", open: true, icon: <I><g transform="rotate(45 12 12)"><rect x="4" y="4" width="7.500" height="7.500" fill="#ef7d78" /><rect x="12.500" y="4" width="7.500" height="7.500" fill="#8dc86a" /><rect x="4" y="12.500" width="7.500" height="7.500" fill="#7bb0f5" /><rect x="12.500" y="12.500" width="7.500" height="7.500" fill="#f3d773" /></g><path d="M9 5L12 9V17M12 10L16 13" stroke="#333" strokeWidth="1.300" fill="none" /></I> },
  { name: "RStudio", open: true, icon: <I><circle cx="12" cy="12" r="12" fill="#75aadb" /><text x="12" y="17" textAnchor="middle" fontFamily="Liberation Serif" fontSize="15" fill="#fff">R</text></I> },
  { name: "Photos", open: true, icon: <I><rect x="1" y="1" width="22" height="22" fill="#1c9cec" /><path d="M1 20L10 10L22 23H1Z" fill="#0b3c74" /><path d="M11 16L15 12L23 19V23H18Z" fill="#1466b5" /><circle cx="16.500" cy="6" r="2" fill="#fff" /></I> },
];

function Taskbar() {
  return (
    <footer className="flex h-10 shrink-0 items-stretch bg-[#25333a] text-white">
      <button aria-label="Start" className="flex w-12 items-center justify-center"><FaWindows className="size-4" /></button>
      <label className="flex w-[344px] shrink-0 items-center gap-3 border border-[#bdbdbd] bg-[#f2f2f2] pl-[11px] text-[#222]">
        <Search className="size-4 -scale-x-100" strokeWidth={1.6} />
        <input aria-label="Search" placeholder="Type here to search" className="min-w-0 flex-1 bg-transparent text-[14px] outline-none placeholder:text-[#333]" />
      </label>
      <div className="flex min-w-0 flex-1 pl-1.5">
        {apps.map((a) => (
          <button
            key={a.name}
            aria-label={a.name}
            className={a.active ? "flex flex-1 flex-col items-center justify-between bg-[#55636b] pt-2" : "flex flex-1 flex-col items-center justify-between pt-2"}
          >
            <span className="flex h-6 items-center">{a.icon}</span>
            {a.open && <span className={a.active ? "h-0.5 w-full bg-[#fbd7a8]" : "h-0.5 w-9 bg-[#fbd7a8]"} />}
          </button>
        ))}
      </div>
      <div className="flex w-[228px] shrink-0 items-center pl-[7px] text-center text-[12px] leading-[17px]">
        <ChevronUp className="size-4" strokeWidth={1.6} />
        <BatteryCharging className="ml-2 size-4" strokeWidth={1.6} />
        <Volume2 className="ml-2 size-4" strokeWidth={1.4} />
        <span className="ml-2.5 w-6">ENG<br />US</span>
        <span className="ml-2 w-16">11:11 PM<br />11/18/2020</span>
        <svg viewBox="0 0 18 18" className="ml-4 size-[18px]" aria-label="Notifications"><path d="M1 1H17V14H12L9 17V14H1Z" fill="#fff" /><path d="M4 4.500H14M4 7.500H14M4 10.500H10" stroke="#25333a" strokeWidth="1.300" /></svg>
      </div>
    </footer>
  );
}

export default function App() {
  return (
    <div className="flex h-screen flex-col overflow-hidden bg-[#f7f7f7] font-['Open_Sans',sans-serif]">
      <TabBar />
      <Toolbar />
      <div className="flex min-h-0 flex-1">
        <main className="flex min-w-0 flex-1 overflow-hidden font-['Roboto',sans-serif]">
          <div className="w-[1016px] shrink-0">
            <ReportHeader />
            {features.map((f) => <FeatureCard key={f.name} f={f} />)}
          </div>
          <Associations />
        </main>
        <div className="flex w-[17px] shrink-0 flex-col bg-[#f1f1f1]">
          <Arrow d="M5 11L8.500 7L12 11Z" />
          <div className="mx-0.5 h-[37px] bg-[#c1c1c1]" />
          <div className="mt-auto"><Arrow d="M5 7L8.500 11L12 7Z" /></div>
        </div>
      </div>
      <div className="flex h-[17px] shrink-0 items-center bg-[#f1f1f1]">
        <Arrow d="M10 5L6 8.500L10 12Z" />
        <div className="flex flex-1"><div className="h-[13px] w-[84%] bg-[#c1c1c1]" /></div>
        <Arrow d="M7 5L11 8.500L7 12Z" />
        <div className="size-[17px] bg-[#dcdcdc]" />
      </div>
      <Downloads />
      <Taskbar />
    </div>
  );
}
